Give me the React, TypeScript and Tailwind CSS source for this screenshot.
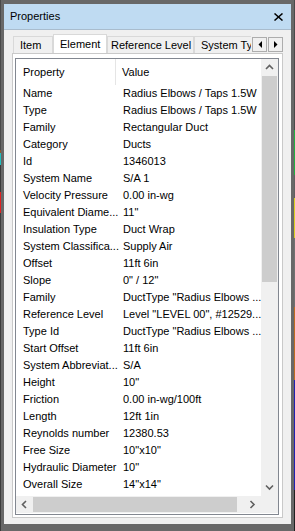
import React from 'react';

const rows: [string, string][] = [
    ['Name', 'Radius Elbows / Taps 1.5W'],
    ['Type', 'Radius Elbows / Taps 1.5W'],
    ['Family', 'Rectangular Duct'],
    ['Category', 'Ducts'],
    ['Id', '1346013'],
    ['System Name', 'S/A 1'],
    ['Velocity Pressure', '0.00 in-wg'],
    ['Equivalent Diame...', '11"'],
    ['Insulation Type', 'Duct Wrap'],
    ['System Classifica...', 'Supply Air'],
    ['Offset', '11ft 6in'],
    ['Slope', '0" / 12"'],
    ['Family', 'DuctType "Radius Elbows ...'],
    ['Reference Level', 'Level "LEVEL 00", #12529...'],
    ['Type Id', 'DuctType "Radius Elbows ...'],
    ['Start Offset', '11ft 6in'],
    ['System Abbreviat...', 'S/A'],
    ['Height', '10"'],
    ['Friction', '0.00 in-wg/100ft'],
    ['Length', '12ft 1in'],
    ['Reynolds number', '12380.53'],
    ['Free Size', '10"x10"'],
    ['Hydraulic Diameter', '10"'],
    ['Overall Size', '14"x14"'],
    ['', '1.36 SF'],
];

// scrollbar arrow chevrons
function Chevron({ dir }: { dir: 'up' | 'down' | 'left' | 'right' }) {
    const vert = dir === 'up' || dir === 'down';
    const d = {
        up: 'M1 5 L4.5 1.5 L8 5',
        down: 'M1 1.5 L4.5 5 L8 1.5',
        left: 'M5 1 L1.5 4.5 L5 8',
        right: 'M1.5 1 L5 4.5 L1.5 8',
    }[dir];
    return (
        <svg width={vert ? 9 : 7} height={vert ? 7 : 9} viewBox={vert ? '0 0 9 7' : '0 0 7 9'}>
            <path d={d} fill="none" stroke="#606060" strokeWidth="1.6" />
        </svg>
    );
}

function Triangle({ left }: { left?: boolean }) {
    return (
        <svg width="4" height="7" viewBox="0 0 4 7">
            <path d={left ? 'M4 0 L0.5 3.5 L4 7 Z' : 'M0 0 L3.5 3.5 L0 7 Z'} fill="#000" />
        </svg>
    );
}

function Tab({ label, width, pl, selected }: { label: string; width: string; pl: string; selected?: boolean }) {
    return (
        <div
            className={
                selected
                    ? `relative z-10 -mb-px h-[20px] shrink-0 border border-b-0 border-[#d9d9d9] bg-white leading-[18px] ${width} ${pl}`
                    : `h-[17px] shrink-0 border border-b-0 border-[#d9d9d9] bg-[#f0f0f0] leading-[16px] ${width} ${pl}`
            }
        >
            {label}
        </div>
    );
}

export default function App() {
    return (
        <div className="flex h-[531px] w-[295px] overflow-hidden bg-[#3a3a3a] font-['Liberation_Sans',Arial,sans-serif] text-[11px] text-black">
            {/* background peeking at left */}
            <div className="flex w-px shrink-0 flex-col">
                <div className="h-[150px] bg-[#4a4a4a]" />
                <div className="h-[3px] bg-[#8a5a30]" />
                <div className="h-[12px] bg-[#20c0c0]" />
                <div className="h-[27px] bg-[#3a3a3a]" />
                <div className="h-[21px] bg-[#e02020]" />
                <div className="flex-1 bg-[#3c3c3c]" />
            </div>

            {/* window */}
            <div className="flex w-[293px] shrink-0 flex-col border-t-[4px] border-r-[3px] border-b-[7px] border-l-[3px] border-[#686868] bg-[#f0f0f0]">
                <div className="flex h-[26px] shrink-0 items-center justify-between border-b border-[#a9bccd] bg-[#bfdbf2] pr-[8px] pl-[6px]">
                    <span className="text-[11px]">Properties</span>
                    <svg width="9" height="8" viewBox="0 0 9 8">
                        <path d="M0.5 0.5 L8.5 7.5 M8.5 0.5 L0.5 7.5" stroke="#000" strokeWidth="1.5" />
                    </svg>
                </div>

                <div className="mt-[4px] flex flex-col px-[8px]">
                    <div className="flex h-[19px] items-end">
                        <div className="ml-px flex h-full w-[238px] items-end overflow-hidden">
                            <Tab label="Item" width="w-[40px]" pl="pl-[6px]" />
                            <Tab label="Element" width="w-[54px]" pl="pl-[6px]" selected />
                            <Tab label="Reference Level" width="w-[87px]" pl="pl-[3px]" />
                            <Tab label="System Type" width="w-[80px]" pl="pl-[6px]" />
                        </div>
                        <div className="mt-[3px] ml-auto flex gap-px self-start">
                            <div className="flex h-[15px] w-[15px] items-center justify-center border border-[#adadad] bg-[#f0f0f0]">
                                <Triangle left />
                            </div>
                            <div className="flex h-[15px] w-[15px] items-center justify-center border border-[#adadad] bg-[#f0f0f0]">
                                <Triangle />
                            </div>
                        </div>
                    </div>

                    <div className="flex h-[465px] flex-col border border-[#c9c9c9] bg-white pt-[4px] pr-[3px] pb-[2px] pl-[2px]">
                        <div className="flex min-h-0 flex-1 flex-col border border-[#828790] pb-px">
                            <div className="flex min-h-0 flex-1">
                                <div className="flex-1 overflow-hidden">
                                    <div className="flex h-[26px]">
                                        <div className="w-[100px] border-r border-[#e5e5e5] pl-[7px] leading-[26px]">Property</div>
                                        <div className="pl-[6px] leading-[26px]">Value</div>
                                    </div>
                                    {rows.map(([k, v], i) => (
                                        <div key={i} className="flex h-[17px] leading-[17px]">
                                            <div className="w-[100px] shrink-0 pl-[7px] whitespace-nowrap">{k}</div>
                                            <div className="pl-[7px] whitespace-nowrap">{v}</div>
                                        </div>
                                    ))}
                                </div>
                                <div className="flex w-[17px] shrink-0 flex-col bg-[#f0f0f0]">
                                    <div className="flex h-[17px] shrink-0 items-center justify-center">
                                        <Chevron dir="up" />
                                    </div>
                                    <div className="mx-px h-[206px] shrink-0 bg-[#cdcdcd]" />
                                    <div className="flex-1" />
                                    <div className="flex h-[17px] shrink-0 items-center justify-center">
                                        <Chevron dir="down" />
                                    </div>
                                </div>
                            </div>
                            <div className="flex h-[17px] shrink-0">
                                <div className="flex flex-1 items-center bg-[#f0f0f0]">
                                    <div className="flex h-full w-[17px] items-center justify-center">
                                        <Chevron dir="left" />
                                    </div>
                                    <div className="h-[15px] w-[204px] bg-[#cdcdcd]" />
                                    <div className="flex-1" />
                                    <div className="flex h-full w-[17px] items-center justify-center">
                                        <Chevron dir="right" />
                                    </div>
                                </div>
                                <div className="w-[17px] bg-[#f0f0f0]" />
                            </div>
                        </div>
                    </div>
                </div>
            </div>

            {/* background peeking at right */}
            <div className="flex w-px shrink-0 flex-col">
                <div className="h-[130px] bg-[#4a4a4a]" />
                <div className="h-[45px] bg-[#20b040]" />
                <div className="h-[23px] bg-[#606060]" />
                <div className="h-[40px] bg-[#d8d020]" />
                <div className="h-[69px] bg-[#707070]" />
                <div className="h-[73px] bg-[#c06a20]" />
                <div className="h-[110px] bg-[#2020b0]" />
                <div className="flex-1 bg-[#202020]" />
            </div>
        </div>
    );
}
